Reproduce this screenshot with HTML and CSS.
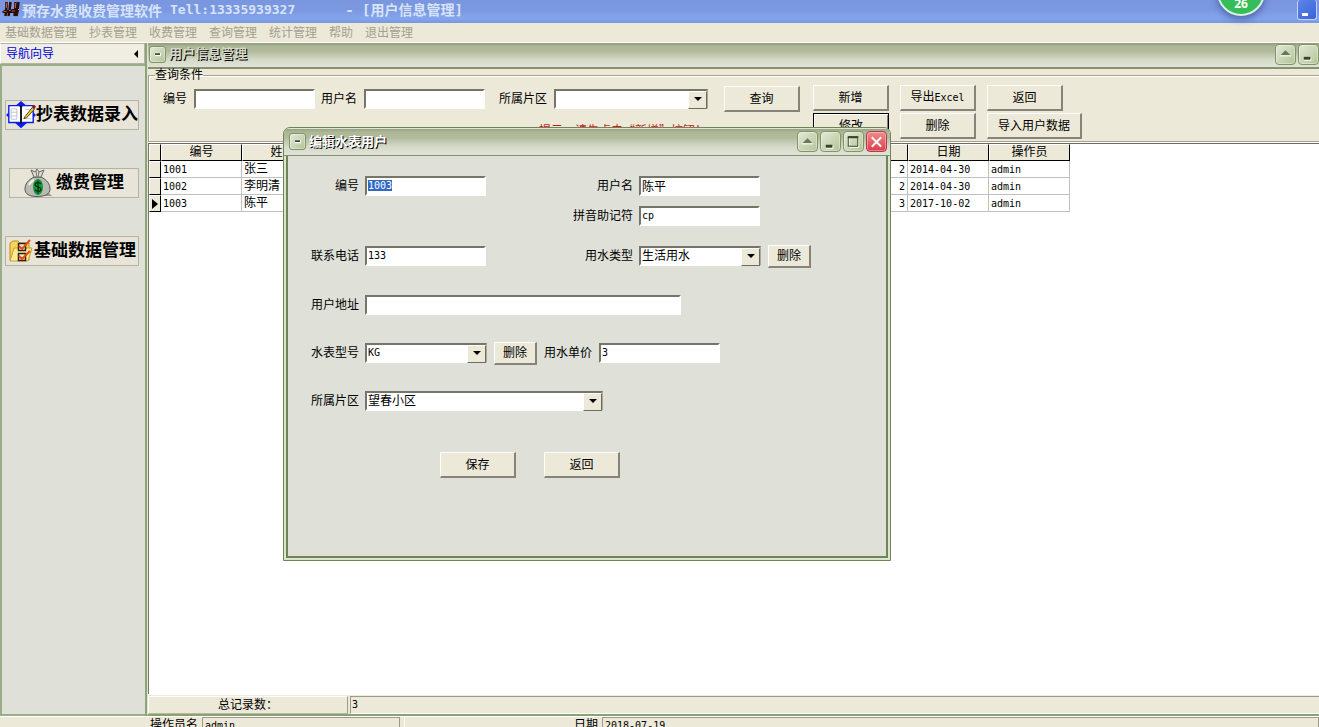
FILE: index.html
```html
<!DOCTYPE html>
<html lang="zh-CN">
<head>
<meta charset="utf-8">
<title>预存水费收费管理软件</title>
<link rel="stylesheet" href="styles.css">
</head>
<body>
<header class="app-title">
  <svg class="app-logo" width="18" height="18" viewBox="0 0 18 18" aria-hidden="true">
    <path d="M4.500 2v5l-1 9M8.500 2l-1 8-1 6M13.500 2v5l-1 9M16.500 2l-1 8-1 6" fill="none" stroke="#2a0d08" stroke-width="2.500"/>
    <path d="M0 12l2-2h6l2-1h7l-1 4H1z" fill="#2a0d08"/>
    <path d="M4.500 3v5M13.500 3v5M1.500 11.500h3M10 11h3" fill="none" stroke="#c0502c" stroke-width="1"/>
    <path d="M7.500 10.500h1M16 9.500h1" fill="none" stroke="#d8a060" stroke-width="1"/>
  </svg>
  <h1 class="app-name">预存水费收费管理软件 <span class="app-latin">Tell:13335939327</span></h1>
  <span class="app-doc">- [用户信息管理]</span>
  <button class="xp-min" type="button" aria-label="最小化"></button>
  <span class="badge">26</span>
</header>

<nav class="menubar">
  <button type="button">基础数据管理</button><button type="button">抄表管理</button><button type="button">收费管理</button><button type="button">查询管理</button><button type="button">统计管理</button><button type="button">帮助</button><button type="button">退出管理</button>
</nav>

<div class="main">
  <aside class="side">
    <div class="side-head"><span>导航向导</span><i class="tri-left"></i></div>
    <div class="side-body">
      <button class="nav-btn" type="button">
        <svg width="32" height="30" viewBox="0 0 32 30" aria-hidden="true">
          <path d="M16 0l8 7H8zM16 29l-8-7h16zM0 15l7-7v14zM32 15l-7-7v14z" fill="#0a1cf0"/>
          <path d="M3 5h11l2 1 2-1h11v18H18l-2 1-2-1H3z" fill="#fff" stroke="#0a1cf0" stroke-width="1.5"/>
          <path d="M16 5v19" stroke="#111" stroke-width="2"/>
          <path d="M5.500 8.500h6v11h-6zM5 12h7M5 16h7M21 9h5M21 19h6" stroke="#b8c4d4" fill="none"/>
          <path d="M20 17l8-10 2 2-8 9-3 1z" fill="#f5d329" stroke="#4a3a10"/>
          <path d="M28 6l2-2 2 2-2 3z" fill="#8f1d14"/>
        </svg>抄表数据录入</button>
      <button class="nav-btn nav-mid" type="button">
        <svg width="28" height="28" viewBox="0 0 28 28" aria-hidden="true">
          <path d="M12 27h16l-4-4z" fill="#999a90"/>
          <path d="M10 8C4 11 1 15 1 20c0 5 4 7.500 12 7.500S26 25 26 20c0-5-3-9-9-12z" fill="#b9bab6" stroke="#55564f"/>
          <path d="M10 8L7 1l4 2 2-3 2 3 5-2-3 7z" fill="#dcddd8" stroke="#66675f"/>
          <path d="M12 2l1 6M15 3l-1 5" stroke="#77786f"/>
          <path d="M5 16c1-3 3-4 5-5" stroke="#f4f4f0" stroke-width="2" fill="none"/>
          <ellipse cx="14" cy="18" rx="5" ry="8" fill="#15973a"/>
          <path d="M17 15c-1-2-6-2-6 .5 0 3 6 2 6 5 0 2.500-5 2.500-6 0M14 11.500v13" stroke="#07280f" stroke-width="1.200" fill="none"/>
        </svg>缴费管理</button>
      <button class="nav-btn" type="button">
        <svg width="26" height="24" viewBox="0 0 26 24" aria-hidden="true">
          <path d="M2 4l3-2h5l2 2h9v17H2z" fill="#f7d55c" stroke="#b98b1c"/>
          <path d="M2 22l4-13h18l-4 13z" fill="#ffeb91" stroke="#c99c2c"/>
          <path d="M10.500 4.500h7v7h-7zM10.500 14.500h7v7h-7z" fill="#ffe9a8" stroke="#222" stroke-width="1.500"/>
          <path d="M11 7l3 3 8-9M11 17l3 3 8-8" stroke="#e3471b" stroke-width="2" fill="none"/>
        </svg>基础数据管理</button>
    </div>
  </aside>

  <section class="child">
    <div class="win-title">
      <button class="win-btn win-menu" type="button" aria-label="系统菜单"><svg width="18" height="17" viewBox="0 0 18 17"><path d="M6 8.500h7" stroke="#fff" stroke-width="4"/><path d="M6 8h6" stroke="#37432b" stroke-width="2"/></svg></button>
      <h2 class="win-name win-name-dim">用户信息管理</h2>
      <button class="win-btn" type="button" aria-label="卷起"><svg width="20" height="20" viewBox="0 0 20 20"><path d="M4 12h12" stroke="#fff"/><path d="M5 11l5-5 5 5z" fill="#69765a"/></svg></button>
      <button class="win-btn" type="button" aria-label="最小化"><svg width="20" height="20" viewBox="0 0 20 20"><path d="M5 15.500h8" stroke="#fff" stroke-width="3"/><path d="M5 14.500h7" stroke="#37432b" stroke-width="3"/></svg></button>
    </div>

    <fieldset class="query">
      <legend>查询条件</legend>
      <div class="filters">
        <label for="q-no">编号</label><input id="q-no" class="box" type="text">
        <label for="q-name">用户名</label><input id="q-name" class="box" type="text">
        <label for="q-area">所属片区</label><span class="combo combo-area"><select id="q-area"><option></option></select></span>
        <button class="btn" type="button">查询</button>
        <p class="hint">提示：请先点击“新增”按钮！</p>
      </div>
      <div class="actions">
        <button class="btn" type="button">新增</button>
        <button class="btn" type="button">导出<span class="latin">Excel</span></button>
        <button class="btn" type="button">返回</button>
        <button class="btn btn-default" type="button">修改</button>
        <button class="btn" type="button">删除</button>
        <button class="btn btn-wide" type="button">导入用户数据</button>
      </div>
    </fieldset>

    <div class="grid-area">
      <table class="data">
        <colgroup><col class="c-mark"><col class="c-std"><col class="c-std"><col class="c-rest"><col class="c-std"><col class="c-std"></colgroup>
        <thead><tr><th></th><th>编号</th><th>姓名</th><th></th><th>日期</th><th>操作员</th></tr></thead>
        <tbody>
          <tr><th></th><td class="latin">1001</td><td>张三</td><td class="latin num">2</td><td class="latin">2014-04-30</td><td class="latin">admin</td></tr>
          <tr><th></th><td class="latin">1002</td><td>李明清</td><td class="latin num">2</td><td class="latin">2014-04-30</td><td class="latin">admin</td></tr>
          <tr><th><i class="tri-right"></i></th><td class="latin">1003</td><td>陈平</td><td class="latin num">3</td><td class="latin">2017-10-02</td><td class="latin">admin</td></tr>
        </tbody>
      </table>
    </div>

    <div class="total"><span class="total-label">总记录数：</span><span class="total-value latin">3</span></div>
  </section>
</div>

<footer class="status">
  <span class="st-label st-first">操作员名</span><span class="st-value latin">admin</span>
  <span class="st-label st-second">日期</span><span class="st-value st-last latin">2018-07-19</span>
</footer>

<div class="dialog" role="dialog" aria-labelledby="dlg-title">
  <div class="win-title dlg-title">
    <button class="win-btn win-menu" type="button" aria-label="系统菜单"><svg width="18" height="17" viewBox="0 0 18 17"><path d="M6 8.500h7" stroke="#fff" stroke-width="4"/><path d="M6 8h6" stroke="#37432b" stroke-width="2"/></svg></button>
    <h2 id="dlg-title" class="win-name">编辑水表用户</h2>
    <button class="win-btn" type="button" aria-label="卷起"><svg width="20" height="20" viewBox="0 0 20 20"><path d="M4 12h12" stroke="#fff"/><path d="M5 11l5-5 5 5z" fill="#69765a"/></svg></button>
    <button class="win-btn" type="button" aria-label="最小化"><svg width="20" height="20" viewBox="0 0 20 20"><path d="M5 15.500h8" stroke="#fff" stroke-width="3"/><path d="M5 14.500h7" stroke="#37432b" stroke-width="3"/></svg></button>
    <button class="win-btn" type="button" aria-label="最大化"><svg width="20" height="20" viewBox="0 0 20 20"><path d="M5.500 5.500h10v10h-10z" fill="none" stroke="#fff"/><path d="M4.500 4.500h10v10h-10z" fill="none" stroke="#37432b"/><path d="M4 5h11" stroke="#37432b" stroke-width="2"/></svg></button>
    <button class="win-btn win-close" type="button" aria-label="关闭"><svg width="20" height="20" viewBox="0 0 20 20"><path d="M5 5l10 10M15 5L5 15" stroke="#fff" stroke-width="2"/></svg></button>
  </div>
  <form class="form">
    <label for="f-no">编号</label>
    <input id="f-no" class="box latin" type="text" value="1003">
    <label for="f-name">用户名</label>
    <input id="f-name" class="box" type="text" value="陈平">

    <label class="col3" for="f-py">拼音助记符</label>
    <input id="f-py" class="box latin" type="text" value="cp">

    <label for="f-tel">联系电话</label>
    <input id="f-tel" class="box latin" type="text" value="133">
    <label for="f-type">用水类型</label>
    <div class="cell"><span class="combo"><select id="f-type"><option>生活用水</option></select></span><button class="btn btn-small" type="button">删除</button></div>

    <label for="f-addr">用户地址</label>
    <input id="f-addr" class="box box-long" type="text">

    <label for="f-model">水表型号</label>
    <div class="cell span"><span class="combo"><select id="f-model" class="latin"><option>KG</option></select></span><button class="btn btn-small" type="button">删除</button><label for="f-price">用水单价</label><input id="f-price" class="box latin" type="text" value="3"></div>

    <label for="f-area">所属片区</label>
    <div class="cell span"><span class="combo combo-long"><select id="f-area"><option>望春小区</option></select></span></div>

    <div class="form-actions"><button class="btn" type="button">保存</button><button class="btn" type="button">返回</button></div>
  </form>
</div>
<script src="script.js"></script>
</body>
</html>
```
FILE: script.js
```js
const first = document.getElementById("f-no");
first.focus();
first.select();
```
FILE: styles.css
```css
* { box-sizing: border-box; }

body {
  margin: 0;
  height: 100vh;
  overflow: hidden;
  display: flex;
  flex-direction: column;
  position: relative;
  background: #ece9d8;
  color: #000;
  font: 12px/16px "Liberation Sans", "Noto Sans CJK SC", sans-serif;
}

button, input, select { font: inherit; color: inherit; margin: 0; }
button { padding: 0; }
h1, h2, p { margin: 0; font-weight: normal; }

.latin { font-family: "DejaVu Sans Mono", "Noto Sans CJK SC", monospace; font-size: 10px; }

/* application title bar */
.app-title {
  flex: none;
  height: 23px;
  display: flex;
  align-items: flex-start;
  padding: 0 2px;
  background: linear-gradient(#7a96df, #7a97e1 40%, #84a5ec 80%, #7797e0);
  color: #d8e4f8;
  position: relative;
}
.app-logo { margin-right: 2px; }
.app-name, .app-doc { font: bold 14px/20px "DejaVu Sans Mono", "Noto Sans CJK SC", monospace; }
.app-name { font-family: "Noto Sans CJK SC", sans-serif; display: flex; gap: 8px; white-space: nowrap; }
.app-latin { font: bold 13px/20px "DejaVu Sans Mono", monospace; }
.app-doc { margin-left: 50px; flex: 1; white-space: nowrap; }
.xp-min {
  width: 20px;
  height: 20px;
  border: 1px solid #c4d4f6;
  border-top: 0;
  border-radius: 3px;
  background: linear-gradient(135deg, #5c86ea, #3a62d8);
  padding: 10px 8px 0 4px;
}
.xp-min::before { content: ""; display: block; height: 3px; background: #fff; }
.badge {
  position: absolute;
  right: 54px;
  top: -32px;
  width: 48px;
  height: 48px;
  border-radius: 50%;
  border: 2px solid #d9efe0;
  background: #35bd59;
  box-shadow: 0 4px 6px rgba(40, 60, 130, .5);
  color: #fff;
  font: bold 12px/12px "Open Sans", sans-serif;
  text-align: center;
  padding-top: 28px;
}

/* menu bar */
.menubar {
  flex: none;
  height: 20px;
  display: flex;
  gap: 12px;
  padding: 0 5px;
  border-bottom: 1px solid #fff;
}
.menubar button { border: 0; background: none; color: #a3a08f; white-space: nowrap; line-height: 18px; }

.main { flex: 1; min-height: 0; display: flex; }

/* navigation sidebar */
.side {
  flex: none;
  width: 147px;
  display: flex;
  flex-direction: column;
  border-right: 2px solid #8fa37b;
}
.side-head {
  height: 21px;
  display: flex;
  align-items: center;
  justify-content: space-between;
  padding: 0 6px 0 5px;
  border: 1px solid #b5b3a2;
  border-left-color: #fff;
  color: #0000e0;
  background: #f0eee2;
}
.tri-left { border: 4px solid transparent; border-left: 0; border-right-color: #000; }
.side-body {
  flex: 1;
  border: 2px solid #9cab88;
  border-right: 0;
  background: #dfe0d8;
  padding: 34px 6px 0 3px;
  display: flex;
  flex-direction: column;
  gap: 38px;
}
.nav-btn {
  height: 30px;
  display: flex;
  align-items: center;
  justify-content: center;
  border: 1px solid #b5b3a4;
  background: #e8e5d8;
  font-size: 17px;
  font-weight: bold;
  white-space: nowrap;
}
.nav-mid { margin-left: 4px; gap: 4px; }

/* themed window chrome */
.win-title {
  flex: none;
  height: 26px;
  display: flex;
  align-items: center;
  gap: 2px;
  padding: 0 0 2px 1px;
  border-bottom: 2px solid #82936d;
  background: linear-gradient(#8d9d7a, #adb798 15%, #b2ba9c 35%, #d6dac8 70%, #e0e2d8);
}
.win-name {
  flex: 1;
  margin-left: 1px;
  font-size: 13px;
  font-weight: bold;
  color: #fff;
  text-shadow: 1px 1px 0 #000;
}
.win-name-dim { color: #d5d9c8; }
.win-btn {
  width: 21px;
  height: 21px;
  border: 1px solid #829466;
  border-radius: 4px;
  background: linear-gradient(135deg, #e3e9d6, #b2c497);
  display: flex;
  align-items: center;
  justify-content: center;
  box-shadow: inset 0 0 0 1px rgba(255, 255, 255, .35);
}
.win-menu { width: 17px; height: 17px; border-radius: 3px; }
.win-close { border-color: #b33c44; background: linear-gradient(#ee8c8c, #df3b4b); }

.child {
  flex: 1;
  min-width: 0;
  display: flex;
  flex-direction: column;
  border-bottom: 2px solid #8aa173;
  border-left: 1px solid #dfe3d0;
}

/* query panel */
.query {
  flex: none;
  margin: 0;
  min-width: 0;
  border: 1px solid #a5a292;
  border-right: 0;
  box-shadow: inset 1px 1px 0 #fff, 0 1px 0 #fff;
  padding: 0 0 2px 14px;
  height: 73px;
  display: flex;
  gap: 14px;
}
.query legend { margin-left: -8px; padding: 0; line-height: 12px; }
.filters {
  display: grid;
  grid-template-columns: 24px 120px 36px 120px 56px 154px 76px;
  grid-template-rows: 28px 24px;
  align-items: center;
  column-gap: 7px;
  row-gap: 2px;
  padding-top: 4px;
  white-space: nowrap;
}
.filters label { text-align: right; }
.filters .btn { margin-left: 9px; }
.hint {
  grid-column: 5 / 8;
  padding: 6px 0 0 48px;
  color: #d01818;
  font-family: "Noto Sans CJK SC", sans-serif;
}
.actions {
  display: grid;
  grid-template-columns: 76px 76px 95px;
  column-gap: 11px;
  row-gap: 2px;
  align-content: start;
  padding: 4px 0 0 8px;
}

.box {
  width: 121px;
  height: 20px;
  padding: 0 2px 2px 1px;
  border: 2px solid #fff;
  border-top-color: #77756a;
  border-left-color: #77756a;
  border-radius: 0;
  background: #fff;
  outline: 0;
}
.box::selection { background: #316ac5; color: #fff; }
.box-long { width: 316px; }

.combo { position: relative; display: block; width: 122px; height: 20px; }
.combo select {
  appearance: none;
  width: 100%;
  height: 20px;
  padding: 0 20px 1px 1px;
  border: 2px solid #fff;
  border-top-color: #77756a;
  border-left-color: #77756a;
  border-right-color: #aaa89a;
  border-radius: 0;
  background: #fff;
  line-height: 14px;
}
.combo::before {
  content: "";
  position: absolute;
  right: 1px;
  top: 2px;
  width: 17px;
  height: 16px;
  background: #ece9d8;
  border: 1px solid #fff;
  border-right-color: #6e6c60;
  border-bottom-color: #6e6c60;
  pointer-events: none;
}
.combo::after {
  content: "";
  position: absolute;
  right: 6px;
  top: 8px;
  border: 4px solid transparent;
  border-top-color: #000;
  border-bottom: 0;
  pointer-events: none;
}
.combo-area { width: 154px; }
.combo-long { width: 238px; }

.btn {
  width: 76px;
  height: 26px;
  border: 1px solid #fff;
  border-right: 2px solid #85837a;
  border-bottom: 2px solid #85837a;
  background: #ece9d8;
  white-space: nowrap;
}
.btn-default { border: 1px solid #000; box-shadow: inset 1px 1px 0 #fff, inset -1px -1px 0 #85837a; }
.btn-wide { width: 95px; }
.btn-small { width: 43px; height: 23px; line-height: 18px; }

/* data grid */
.grid-area {
  flex: 1;
  min-height: 0;
  margin-top: 1px;
  border-top: 1px solid #6e6c60;
  border-left: 1px solid #77756a;
  background: #fff;
}
.data { border-collapse: separate; border-spacing: 0; table-layout: fixed; width: 921px; }
.c-mark { width: 12px; }
.c-std { width: 81px; }
.data tr { height: 17px; }
.data th, .data td { height: 17px; padding: 0 2px; line-height: 15px; white-space: nowrap; text-align: left; font-weight: normal; }
.data th {
  text-align: center;
  background: #ece9d8;
  border: 1px solid #000;
  border-top-color: #fff;
  border-left-color: #fff;
}
.data td { border: solid #c0c0c0; border-width: 0 1px 1px 0; }
.data .num { text-align: right; }
.tri-right { display: inline-block; border: 5px solid transparent; border-right: 0; border-left: 6px solid #000; vertical-align: middle; }

/* record counter */
.total { flex: none; height: 20px; display: flex; gap: 2px; padding-top: 1px; border-top: 1px solid #fff; }
.total-label { width: 200px; text-align: center; border: 1px solid #fff; border-right-color: #9d9a8a; border-bottom-color: #b9b6a6; }
.total-value { flex: 1; border: 1px solid #9d9a8a; border-bottom-color: #fff; border-right: 0; padding-left: 1px; }

/* status bar */
.status {
  flex: none;
  height: 11px;
  overflow: hidden;
  display: flex;
  gap: 4px;
  border-top: 1px solid #fff;
}
.st-label { text-align: right; line-height: 16px; flex: none; }
.st-first { width: 198px; }
.st-second { width: 194px; border-left: 1px solid #fff; }
.st-value { width: 198px; height: 20px; flex: none; border: 1px solid #9d9a8a; line-height: 16px; padding-left: 2px; }
.st-last { flex: 1; }

/* floating edit window */
.dialog {
  position: absolute;
  left: 283px;
  top: 127px;
  width: 608px;
  height: 434px;
  display: flex;
  flex-direction: column;
  border: 1px solid #6f8459;
  border-radius: 7px 7px 0 0;
  background: #dbe4cc;
  padding: 0 2px 2px;
  overflow: hidden;
}
.dlg-title { height: 28px; margin: 0 -2px; padding: 0 3px 0 5px; box-shadow: inset 0 1px 0 #dfe5d2; border-bottom-width: 1px; }
.form {
  flex: 1;
  border: 1px solid #6f8459;
  border-width: 0 2px 2px;
  background: #dfe0d8;
  display: grid;
  grid-template-columns: 71px 200px 62px 1fr;
  grid-template-rows: 30px 30px 50px 48px 48px 48px 80px;
  column-gap: 6px;
  align-items: center;
  padding-top: 15px;
  white-space: nowrap;
}
.form > label { text-align: right; }
.form .col3 { grid-column: 3; }
.form .box-long, .form .span { grid-column: 2 / 5; }
.cell { display: flex; align-items: center; gap: 7px; }
.form-actions { grid-column: 1 / 5; display: flex; gap: 28px; padding-left: 152px; }
```
